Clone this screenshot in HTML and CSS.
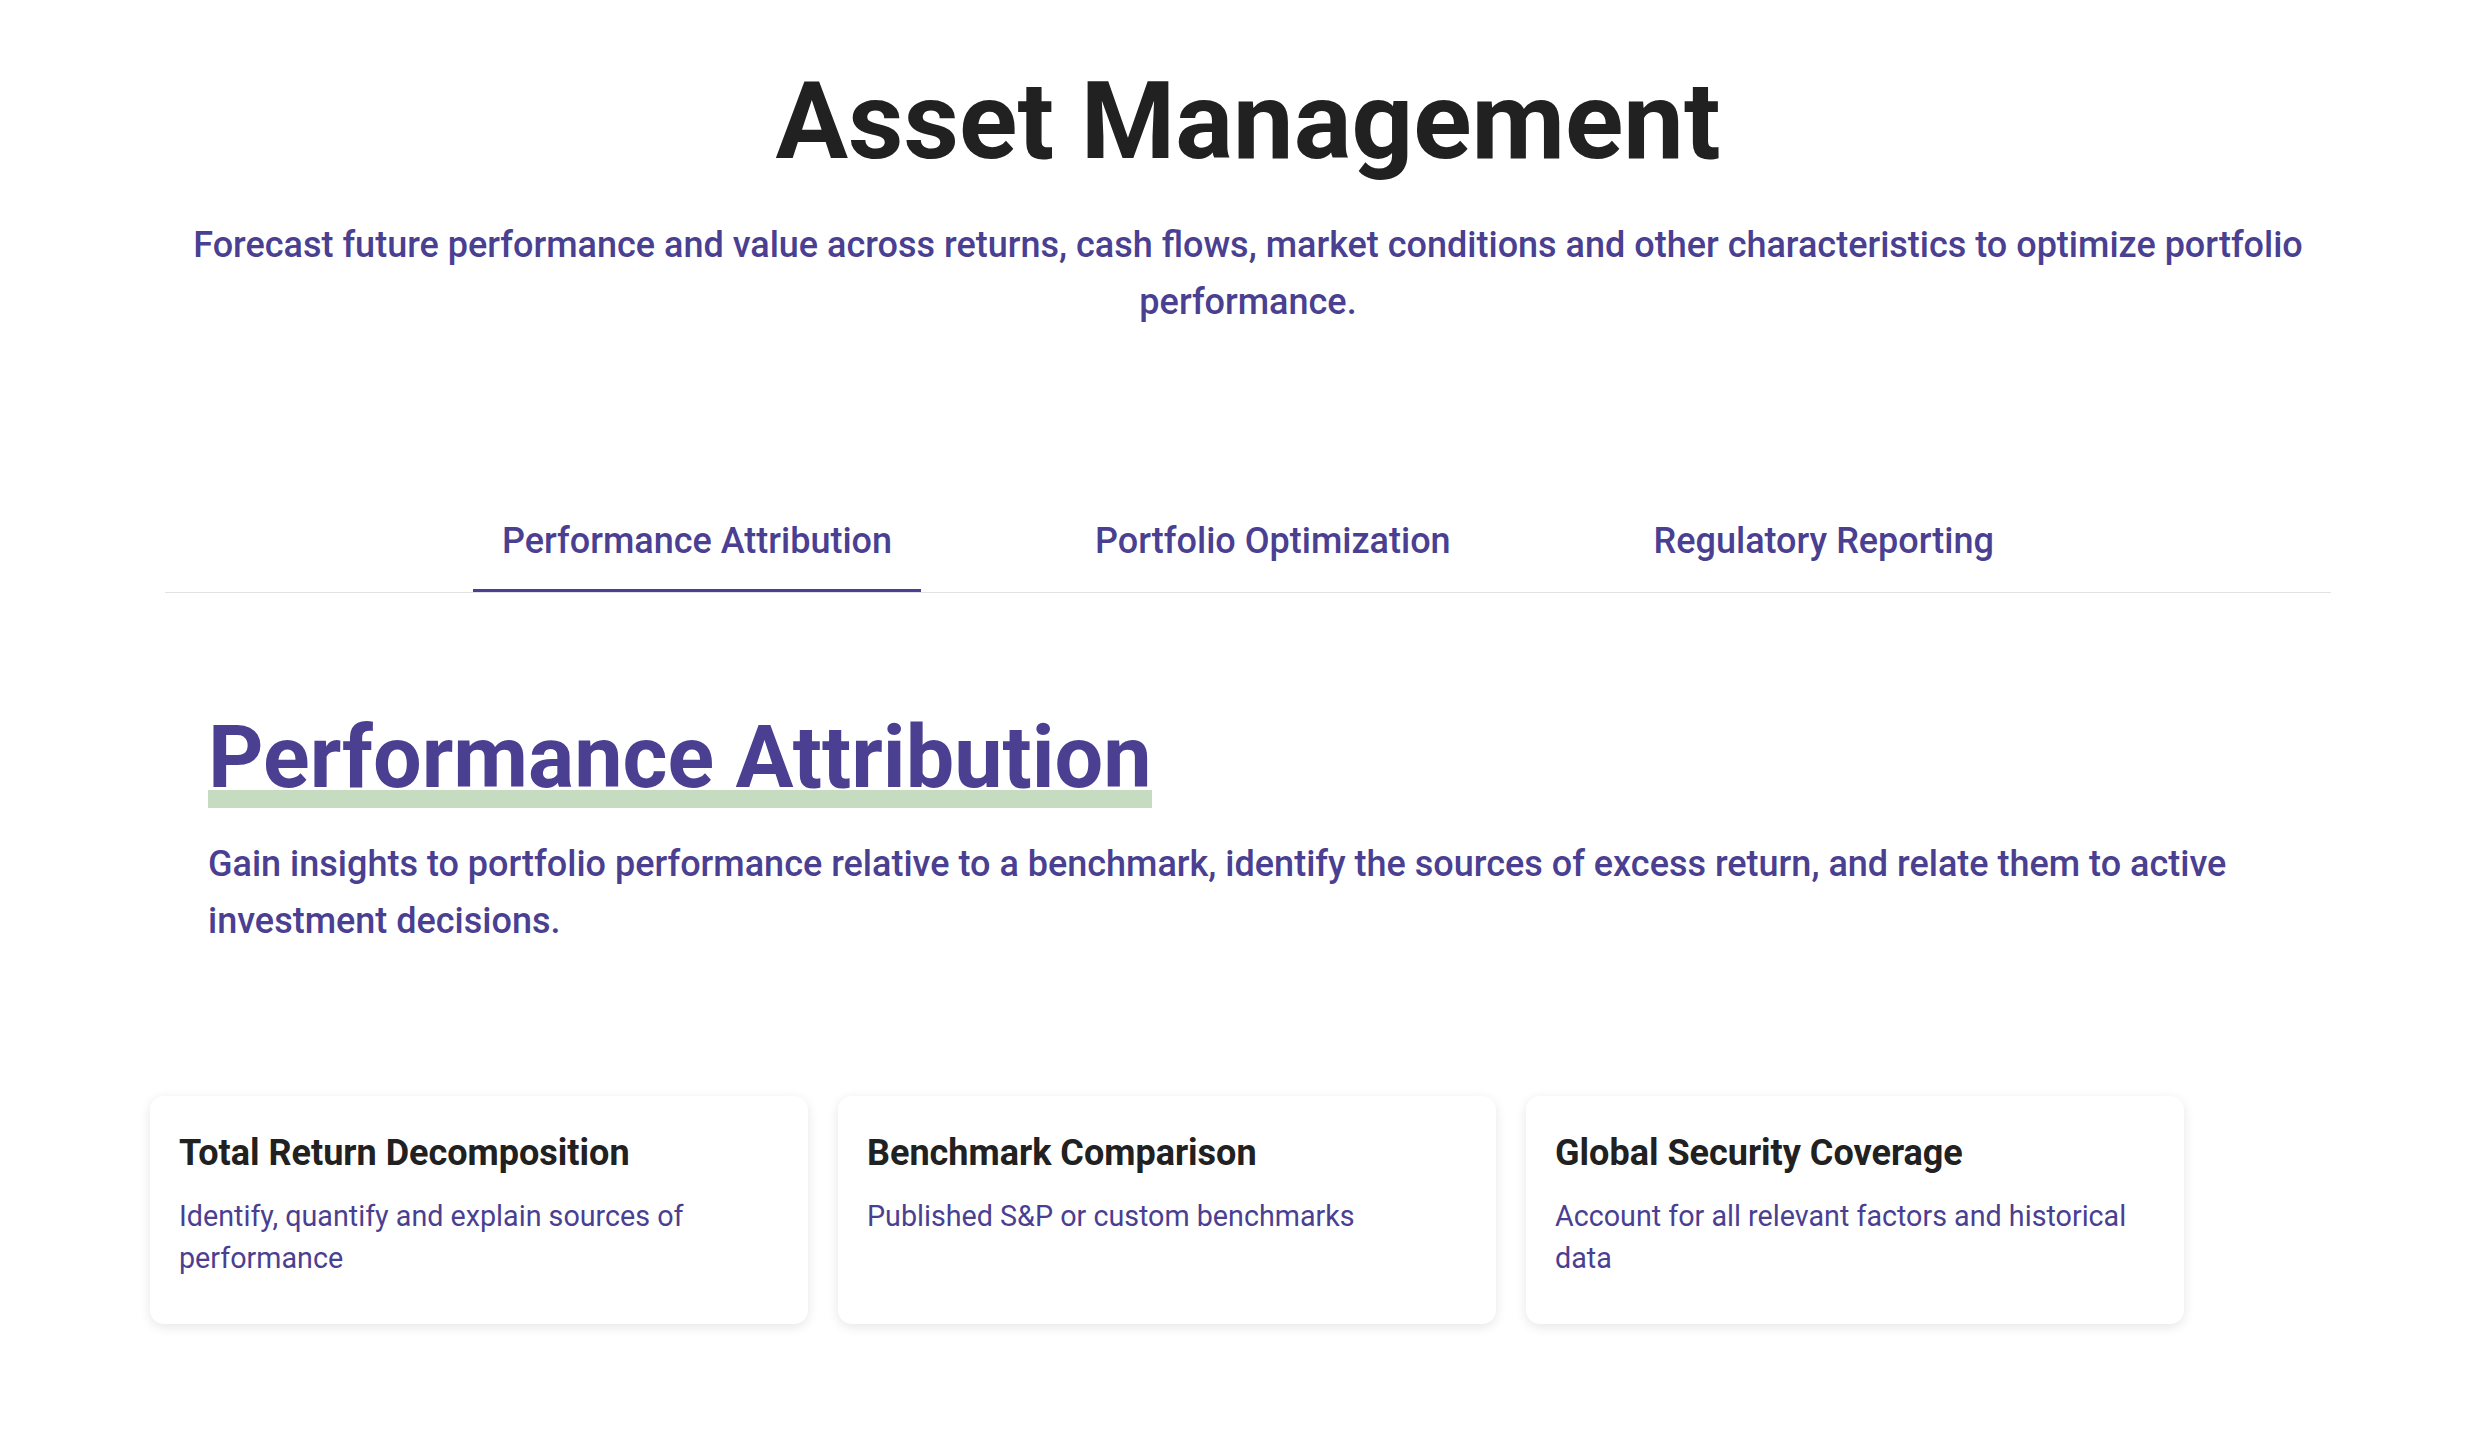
FILE: index.html
```html
<!DOCTYPE html>
<html lang="en">
<head>
<meta charset="utf-8">
<title>Asset Management</title>
<link rel="stylesheet" href="styles.css">
</head>
<body>
<div class="page">
  <header class="hero">
    <h1 class="title">Asset Management</h1>
    <p class="lead">Forecast future performance and value across returns, cash flows, market conditions and other characteristics to optimize portfolio performance.</p>
  </header>
  <div class="wrap">
    <nav class="tabs">
      <div class="tab active">Performance Attribution</div>
      <div class="tab">Portfolio Optimization</div>
      <div class="tab">Regulatory Reporting</div>
    </nav>
    <section class="panel">
      <h2 class="panel-title"><span class="hl">Performance Attribution</span></h2>
      <p class="panel-desc">Gain insights to portfolio performance relative to a benchmark, identify the sources of excess return, and relate them to active investment decisions.</p>
    </section>
    <div class="cards">
      <div class="card">
        <h3 class="card-title">Total Return Decomposition</h3>
        <p class="card-text">Identify, quantify and explain sources of performance</p>
      </div>
      <div class="card">
        <h3 class="card-title">Benchmark Comparison</h3>
        <p class="card-text">Published S&amp;P or custom benchmarks</p>
      </div>
      <div class="card">
        <h3 class="card-title">Global Security Coverage</h3>
        <p class="card-text">Account for all relevant factors and historical data</p>
      </div>
    </div>
  </div>
</div>
</body>
</html>
```
FILE: styles.css
```css
html, body {
  margin: 0;
  padding: 0;
  background: #ffffff;
}
body {
  font-family: Roboto, "Liberation Sans", sans-serif;
  color: #212121;
}
.page {
  padding-top: 57px;
  padding-bottom: 100px;
}
.hero {
  text-align: center;
  margin-left: 165px;
  width: 2166px;
}
.title {
  margin: 0;
  font-size: 108px;
  font-weight: 700;
  line-height: 1.2;
  color: #212121;
}
.lead {
  margin: 30px 0 0;
  font-size: 36px;
  font-weight: 500;
  line-height: 57px;
  color: #4a3f91;
}
.wrap {
  margin-left: 165px;
  width: 2166px;
}
.tabs {
  margin-top: 162px;
  display: flex;
  justify-content: center;
  gap: 145px;
  border-bottom: 1px solid #e2e2e2;
}
.tab {
  padding: 27px 29px;
  font-size: 36px;
  font-weight: 500;
  color: #4a3f91;
  border-bottom: 3px solid transparent;
  white-space: nowrap;
}
.tab.active {
  border-bottom-color: #4a3f91;
}
.panel {
  padding: 0 43px;
  margin-top: 113px;
}
.panel-title {
  margin: 0;
  font-size: 86.3px;
  font-weight: 700;
  line-height: 1.2;
  color: #4a3f91;
}
.hl {
  background-image: linear-gradient(#c5dcc0, #c5dcc0);
  background-size: 100% 18px;
  background-position: 0 100%;
  background-repeat: no-repeat;
}
.panel-desc {
  margin: 27px 0 0;
  font-size: 36px;
  font-weight: 500;
  line-height: 57px;
  color: #4a3f91;
}
.cards {
  margin-top: 146px;
  margin-left: -15px;
  display: flex;
  gap: 30px;
}
.card {
  width: 658px;
  box-sizing: border-box;
  padding: 36px 29px 45px;
  border-radius: 14px;
  background: #ffffff;
  box-shadow: 0 3px 12px rgba(0, 0, 0, 0.1);
}
.card-title {
  margin: 0;
  font-size: 36px;
  font-weight: 700;
  color: #212121;
}
.card-text {
  margin: 22px 0 0;
  font-size: 28.7px;
  font-weight: 400;
  line-height: 41.5px;
  color: #4a3f91;
}
```
